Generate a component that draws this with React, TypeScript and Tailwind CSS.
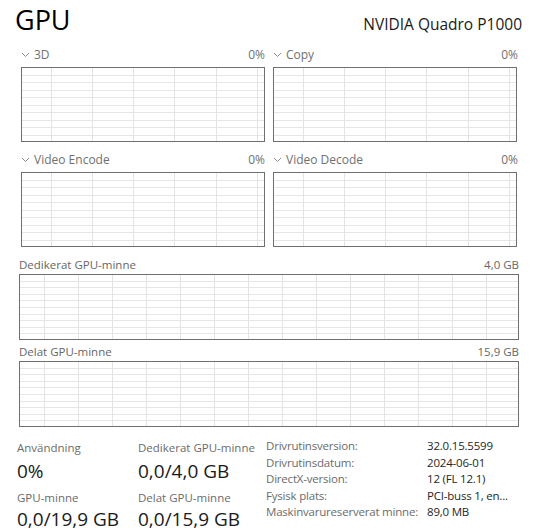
import React from 'react';

const Chevron: React.FC = () => (
  <svg width="9" height="6" viewBox="0 0 9 6" className="mr-[4px] shrink-0">
    <polyline points="1,1 4.5,4.5 8,1" fill="none" stroke="#8c8c8c" strokeWidth="1" />
  </svg>
);

type GridProps = { w: number; h: number; x0: number; dx: number; dy: number };

// graph background: the light grid inside the dark border
const GraphGrid: React.FC<GridProps> = ({ w, h, x0, dx, dy }) => {
  const xs: number[] = [];
  for (let x = x0; x < w; x += dx) xs.push(Math.round(x) + 0.5);
  const ys: number[] = [];
  for (let i = 1; i < 10; i++) ys.push(Math.round(i * dy - 1) + 0.5);

  return (
    <svg width={w} height={h} viewBox={`0 0 ${w} ${h}`} shapeRendering="crispEdges" className="block">
      {ys.map((y) => (
        <line key={'h' + y} x1="0" x2={w} y1={y} y2={y} stroke="#e6e6e6" strokeWidth="1" />
      ))}
      {xs.map((x) => (
        <line key={'v' + x} x1={x} x2={x} y1="0" y2={h} stroke="#e3e3e3" strokeWidth="1" />
      ))}
    </svg>
  );
};

const EngineCell: React.FC<{ label: string; value: string }> = ({ label, value }) => (
  <div className="flex flex-col">
    <div className="flex items-center justify-between h-[19px] text-[12px] text-[#707070] mb-[3px]">
      <div className="flex items-center">
        <Chevron />
        <span>{label}</span>
      </div>
      <span>{value}</span>
    </div>
    <div className="w-[244px] h-[75px] border border-[#6f6f6f] bg-white">
      <GraphGrid w={242} h={73} x0={28.7} dx={41.2} dy={7.5} />
    </div>
  </div>
);

const MemoryGraph: React.FC<{ label: string; value: string }> = ({ label, value }) => (
  <div className="flex flex-col w-[500px]">
    <div className="flex items-center justify-between h-[18px] text-[11.5px] text-[#666666]">
      <span>{label}</span>
      <span>{value}</span>
    </div>
    <div className="w-[500px] h-[66px] border border-[#6f6f6f] bg-white">
      <GraphGrid w={498} h={64} x0={24.3} dx={33.95} dy={6.6} />
    </div>
  </div>
);

const details = [
  ['Drivrutinsversion:', '32.0.15.5599'],
  ['Drivrutinsdatum:', '2024-06-01'],
  ['DirectX-version:', '12 (FL 12.1)'],
  ['Fysisk plats:', 'PCI-buss 1, en...'],
  ['Maskinvarureserverat minne:', '89,0 MB'],
];

const Stat: React.FC<{ label: string; value: string; last?: boolean }> = ({ label, value, last }) => (
  <div className="flex flex-col">
    <span className={`text-[11.5px] text-[#6b6b6b] whitespace-nowrap ${last ? 'leading-[16px]' : 'leading-[18px]'}`}>{label}</span>
    <span className={`text-[19px] leading-[26px] text-[#1a1a1a] whitespace-nowrap ${last ? '' : 'mt-[1px]'}`}>{value}</span>
  </div>
);

const App: React.FC = () => {
  return (
    <div className="w-[545px] h-[532px] bg-white overflow-hidden font-['Open_Sans','Noto_Sans',sans-serif] text-[#1a1a1a]">
      <div className="flex items-baseline justify-between h-[45px] pt-[1px] pl-[15px] pr-[23px]">
        <span className="text-[27px] leading-[38px] text-black">GPU</span>
        <span className="text-[15.5px] text-[#1a1a1a]">NVIDIA Quadro P1000</span>
      </div>

      <div className="grid grid-cols-[244px_245px] gap-x-[8px] gap-y-[8px] pl-[21px]">
        <EngineCell label="3D" value="0%" />
        <EngineCell label="Copy" value="0%" />
        <EngineCell label="Video Encode" value="0%" />
        <EngineCell label="Video Decode" value="0%" />
      </div>

      <div className="flex flex-col pl-[19px] mt-[9px] gap-[3px]">
        <MemoryGraph label="Dedikerat GPU-minne" value="4,0 GB" />
        <MemoryGraph label="Delat GPU-minne" value="15,9 GB" />
      </div>

      <div className="flex items-start mt-[10px]">
        <div className="w-[121px] pl-[17px] pt-[2px] box-content">
          <Stat label="Användning" value="0%" />
          <div className="mt-[6px]">
            <Stat label="GPU-minne" value="0,0/19,9 GB" last />
          </div>
        </div>
        <div className="w-[128px] pt-[2px]">
          <Stat label="Dedikerat GPU-minne" value="0,0/4,0 GB" />
          <div className="mt-[6px]">
            <Stat label="Delat GPU-minne" value="0,0/15,9 GB" last />
          </div>
        </div>
        <div className="grid grid-cols-[161px_1fr] content-start pt-[1px] text-[11.5px] leading-[16.6px] tracking-[-0.2px]">
          {details.map(([k, v]) => (
            <React.Fragment key={k}>
              <span className="text-[#6b6b6b] whitespace-nowrap">{k}</span>
              <span className="text-[#262626] whitespace-nowrap">{v}</span>
            </React.Fragment>
          ))}
        </div>
      </div>
    </div>
  );
};

export default App;
